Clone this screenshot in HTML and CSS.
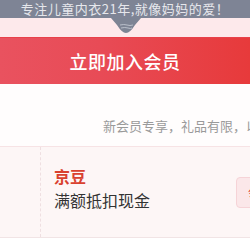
FILE: index.html
```html
<!DOCTYPE html>
<html lang="zh">
<head>
<meta charset="utf-8">
<link rel="stylesheet" href="styles.css">
</head>
<body>
<div class="page">
  <div class="banner">专注儿童内衣21年,就像妈妈的爱！</div>
  <div class="band">
    <svg class="notch" width="30" height="16" viewBox="0 0 30 16">
      <path d="M0 0 H30 L24 7 Q19 15 15 15 Q11 15 6 7 Z" fill="#7d8494"/>
      <path d="M9 7 Q13 6 16 7 T22 7" stroke="#b9bfca" stroke-width="1" fill="none"/>
      <path d="M10 10 Q14 9 17 10 T21 10" stroke="#b9bfca" stroke-width="1" fill="none"/>
    </svg>
  </div>
  <div class="join">立即加入会员</div>
  <div class="tip">新会员专享，礼品有限，以先到先得为准</div>
  <div class="card">
    <div class="card-left"></div>
    <div class="card-body">
      <div class="card-title">京豆</div>
      <div class="card-desc">满额抵扣现金</div>
    </div>
    <div class="card-btn">领取</div>
  </div>
</div>
</body>
</html>
```
FILE: styles.css
```css
html, body {
  margin: 0;
  padding: 0;
  background: #ffffff;
}
.page {
  width: 250px;
  height: 250px;
  overflow: hidden;
  font-family: "Noto Sans CJK SC", "Noto Sans", sans-serif;
}
.banner {
  height: 18px;
  background: #7e8495;
  color: #e6e7ec;
  font-size: 13px;
  line-height: 17px;
  text-align: center;
  white-space: nowrap;
  letter-spacing: 0.5px;
}
.band {
  height: 19px;
  background: #fde9eb;
  display: flex;
  justify-content: center;
  align-items: flex-start;
}
.notch {
  display: block;
  margin-left: 1px;
}
.join {
  height: 46px;
  border-top: 1px solid #e8414a;
  background: linear-gradient(90deg, #e9525f 0%, #e84b56 40%, #e73a3b 100%);
  color: #ffffff;
  font-size: 18px;
  font-weight: 500;
  display: flex;
  align-items: center;
  justify-content: center;
  letter-spacing: 0.5px;
}
.tip {
  height: 62px;
  box-sizing: border-box;
  padding-left: 103px;
  padding-top: 33px;
  font-size: 13px;
  line-height: 18px;
  color: #9a9a9a;
  white-space: nowrap;
  background: #fffdfd;
}
.card {
  height: 92px;
  box-sizing: border-box;
  border-top: 1px solid #f7e3e5;
  border-bottom: 1px solid #f1e4e5;
  background: #fdf6f6;
  display: flex;
  align-items: flex-start;
}
.card-left {
  width: 40px;
  align-self: stretch;
  border-right: 1px dashed #efdfe1;
  flex: none;
}
.card-body {
  flex: 1;
  padding-left: 13px;
  padding-top: 18px;
}
.card-title {
  color: #d9412f;
  font-size: 16px;
  font-weight: 700;
  line-height: 22px;
}
.card-desc {
  color: #333333;
  font-size: 16px;
  line-height: 26px;
}
.card-btn {
  flex: none;
  width: 50px;
  height: 31px;
  margin-right: -36px;
  margin-top: 30px;
  box-sizing: border-box;
  border: 1px solid #f6d3d7;
  border-radius: 4px;
  background: #fbe7e9;
  color: #d9412f;
  font-size: 13px;
  line-height: 29px;
  padding-left: 11px;
}
```
